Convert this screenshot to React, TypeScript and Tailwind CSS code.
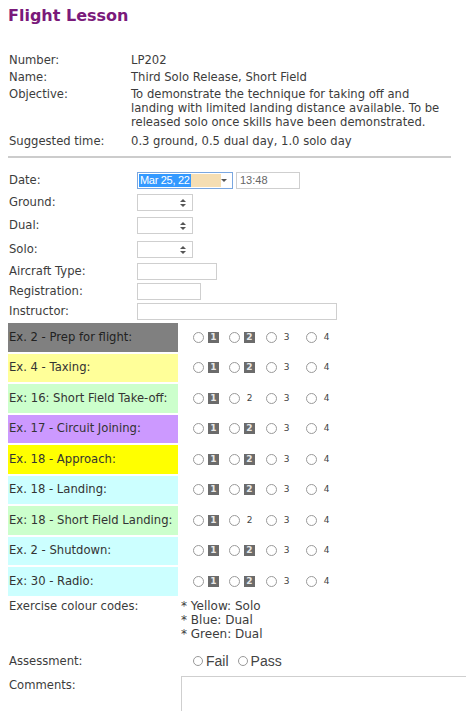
import React from 'react';

type Exercise = {
  label: string;
  bg: string;
  text?: string;
  plain2?: boolean;
};

const EXERCISES: Exercise[] = [
  { label: 'Ex. 2 - Prep for flight:', bg: 'bg-[#808080]', text: 'text-[#222]' },
  { label: 'Ex. 4 - Taxing:', bg: 'bg-[#ffff99]' },
  { label: 'Ex: 16: Short Field Take-off:', bg: 'bg-[#ccffcc]', plain2: true },
  { label: 'Ex. 17 - Circuit Joining:', bg: 'bg-[#cc99ff]' },
  { label: 'Ex. 18 - Approach:', bg: 'bg-[#ffff00]' },
  { label: 'Ex. 18 - Landing:', bg: 'bg-[#ccffff]' },
  { label: 'Ex: 18 - Short Field Landing:', bg: 'bg-[#ccffcc]', plain2: true },
  { label: 'Ex. 2 - Shutdown:', bg: 'bg-[#ccffff]' },
  { label: 'Ex: 30 - Radio:', bg: 'bg-[#ccffff]' },
];

const Radio = () => (
  <span className="block h-[11px] w-[11px] shrink-0 rounded-full border border-[#9a9a9a] bg-white" />
);

const Badge = ({ n }: { n: number }) => (
  <span className="flex h-[11px] w-[11px] items-center justify-center bg-[#6b6b6b] text-[9px] font-bold leading-none text-[#e8e8e8]">
    {n}
  </span>
);

const Plain = ({ n }: { n: number }) => (
  <span className="flex w-[11px] justify-center text-[9px] leading-none text-[#444]">{n}</span>
);

const Spinner = () => (
  <div className="flex h-[17px] w-[56px] items-center justify-end border border-[#cfcfcf] bg-white pr-[6px]">
    <div className="flex flex-col items-center gap-[2px]">
      <span className="block h-0 w-0 border-x-[3px] border-b-[3px] border-x-transparent border-b-[#555]" />
      <span className="block h-0 w-0 border-x-[3px] border-t-[3px] border-x-transparent border-t-[#555]" />
    </div>
  </div>
);

const TextBox = ({ w }: { w: string }) => <div className={`h-[17px] border border-[#cfcfcf] bg-white ${w}`} />;

export default function App() {
  return (
    <div className="min-h-[711px] bg-white pl-[8px] text-[11.6px] leading-[17px] text-[#3c3c3c]" style={{ fontFamily: '"DejaVu Sans", Verdana, sans-serif' }}>
      <h1 className="pt-[6px] text-[16px] font-bold leading-[20px] text-[#7a1a7a]">Flight Lesson</h1>

      <div className="mt-[26px] flex flex-col">
        <div className="flex">
          <div className="w-[123px] pl-[1px]">Number:</div>
          <div>LP202</div>
        </div>
        <div className="flex">
          <div className="w-[123px] pl-[1px]">Name:</div>
          <div>Third Solo Release, Short Field</div>
        </div>
        <div className="flex">
          <div className="w-[123px] pl-[1px]">Objective:</div>
          <div className="whitespace-nowrap pt-[1px] pb-[4px] leading-[14px]">
            To demonstrate the technique for taking off and
            <br />
            landing with limited landing distance available. To be
            <br />
            released solo once skills have been demonstrated.
          </div>
        </div>
        <div className="flex">
          <div className="w-[123px] pl-[1px]">Suggested time:</div>
          <div>0.3 ground, 0.5 dual day, 1.0 solo day</div>
        </div>
      </div>

      <div className="mt-[6px] mr-[15px] h-[2px] bg-[#cccccc]" />

      <div className="mt-[14px] flex items-center">
        <div className="w-[129px] pl-[1px]">Date:</div>
        <div className="flex h-[17px] w-[96px] items-center border border-[#7aa7e0] bg-white">
          <span className="ml-[1px] whitespace-nowrap bg-[#3399ff] px-[1px] text-[11px] leading-[13px] tracking-[-0.3px] text-white" style={{ fontFamily: '"Liberation Sans", Arial, sans-serif' }}>
            Mar 25, 22
          </span>
          <span className="h-[13px] w-[33px] bg-[#f5deb3]" />
          <span className="ml-auto mr-[5px] block h-0 w-0 border-x-[3px] border-t-[3px] border-x-transparent border-t-[#555]" />
        </div>
        <div className="ml-[3px] flex h-[17px] w-[64px] items-center border border-[#cfcfcf] pl-[3px] text-[11px] text-[#666]" style={{ fontFamily: '"Liberation Sans", Arial, sans-serif' }}>
          13:48
        </div>
      </div>

      <div className="mt-[5px] flex items-center">
        <div className="w-[129px] pl-[1px]">Ground:</div>
        <Spinner />
      </div>
      <div className="mt-[6px] flex items-center">
        <div className="w-[129px] pl-[1px]">Dual:</div>
        <Spinner />
      </div>
      <div className="mt-[7px] flex items-center">
        <div className="w-[129px] pl-[1px]">Solo:</div>
        <Spinner />
      </div>
      <div className="mt-[5px] flex items-center">
        <div className="w-[129px] pl-[1px]">Aircraft Type:</div>
        <TextBox w="w-[80px]" />
      </div>
      <div className="mt-[3px] flex items-center">
        <div className="w-[129px] pl-[1px]">Registration:</div>
        <TextBox w="w-[64px]" />
      </div>
      <div className="mt-[3px] flex items-center">
        <div className="w-[129px] pl-[1px]">Instructor:</div>
        <TextBox w="w-[200px]" />
      </div>

      <div className="mt-[3px] flex flex-col gap-[2px]">
        {EXERCISES.map((ex) => (
          <div key={ex.label} className="flex items-center">
            <div className={`flex h-[28.5px] w-[170px] items-center whitespace-nowrap pl-[1px] ${ex.bg} ${ex.text ?? 'text-[#333]'}`}>
              {ex.label}
            </div>
            <div className="ml-[15px] flex items-center">
              <Radio />
              <span className="ml-[4px]"><Badge n={1} /></span>
              <span className="ml-[10px]"><Radio /></span>
              <span className="ml-[4px]">{ex.plain2 ? <Plain n={2} /> : <Badge n={2} />}</span>
              <span className="ml-[11px]"><Radio /></span>
              <span className="ml-[4px]"><Plain n={3} /></span>
              <span className="ml-[14px]"><Radio /></span>
              <span className="ml-[4px]"><Plain n={4} /></span>
            </div>
          </div>
        ))}
      </div>

      <div className="mt-[2px] flex">
        <div className="w-[173px] pl-[1px]">Exercise colour codes:</div>
        <div className="flex flex-col pt-[1px] text-[12px] leading-[14px]">
          <span>* Yellow: Solo</span>
          <span>* Blue: Dual</span>
          <span>* Green: Dual</span>
        </div>
      </div>

      <div className="mt-[12px] flex items-center">
        <div className="w-[185px] pl-[1px]">Assessment:</div>
        <div className="flex items-center gap-[3px] text-[14px] text-[#444]" style={{ fontFamily: '"Liberation Sans", Arial, sans-serif' }}>
          <span className="inline-block h-[10px] w-[10px] rounded-full border border-[#999]" />
          <span>Fail</span>
          <span className="ml-[6px] inline-block h-[10px] w-[10px] rounded-full border border-[#999]" />
          <span>Pass</span>
        </div>
      </div>

      <div className="mt-[6px] flex">
        <div className="w-[173px] pl-[1px] pt-[1px]">Comments:</div>
        <div className="h-[40px] flex-1 border border-r-0 border-[#cfcfcf]" />
      </div>
    </div>
  );
}
